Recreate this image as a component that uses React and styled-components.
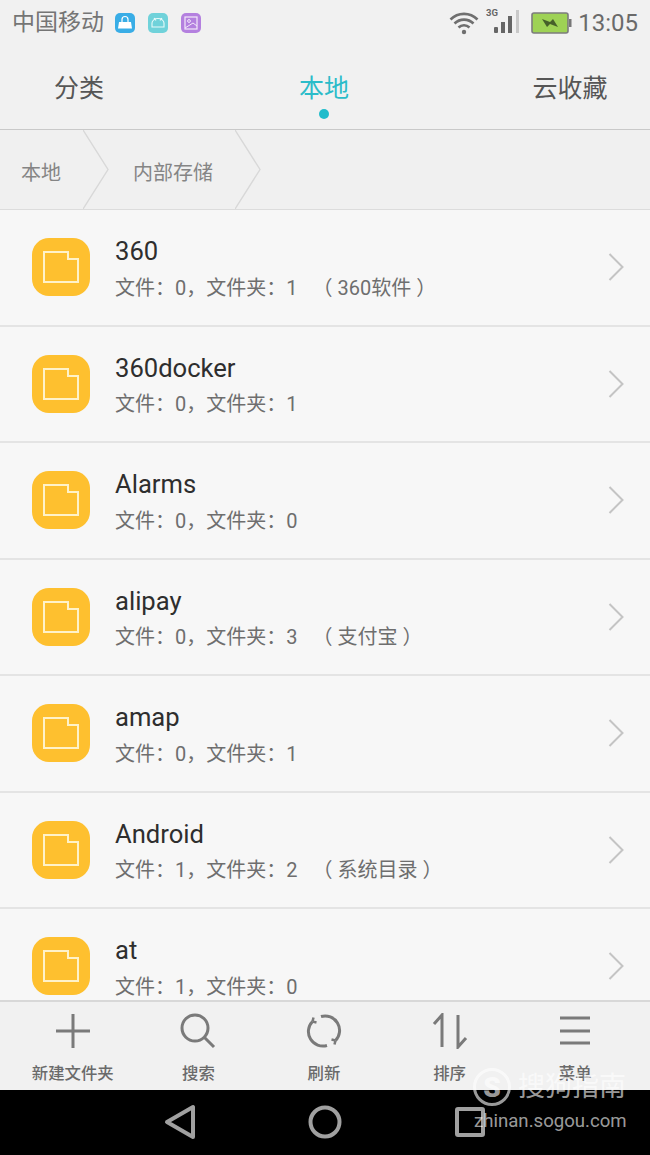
import React from "react";
import styled, { createGlobalStyle } from "styled-components";

const Global = createGlobalStyle`
  html, body { margin: 0; padding: 0; background: #000; }
  body { font-family: Roboto, "Noto Sans CJK SC", sans-serif; }
  * { box-sizing: border-box; }
`;

const Screen = styled.div`
  position: relative; width: 650px; height: 1155px; display: flex; flex-direction: column;
  overflow: hidden; background: #f1f1f1;
`;
const StatusBar = styled.div`
  height: 46px; flex: none; display: flex; align-items: center; padding: 0 12px; color: #757575;
`;
const Carrier = styled.span`
  font-size: 23px; line-height: 46px; width: 103px;
`;
const NotifyIcons = styled.div`
  display: flex; gap: 13px; flex: 1;
`;
const StatusRight = styled.div`
  display: flex; align-items: center;
`;
const StatusIcon = styled.svg`
  flex: none; margin-left: ${p => p.$gap || 0}px;
`;
const Clock = styled.span`
  font-size: 24px; color: #6a6a6a; margin-left: 6px;
`;
const Tabs = styled.nav`
  height: 84px; flex: none; display: grid; grid-template-columns: 158px 1fr 160px;
  border-bottom: 1px solid #c9c9c9;
`;
const Tab = styled.div`
  position: relative; display: flex; justify-content: center; padding-top: 25px;
  font-size: 25px; line-height: 36px; color: ${p => (p.$active ? "#2bbcc9" : "#565656")};
`;
const Dot = styled.i`
  position: absolute; left: 50%; top: 63px; width: 10px; height: 10px; margin-left: -5px;
  border-radius: 50%; background: #1fbccb;
`;
const Crumbs = styled.div`
  height: 80px; flex: none; display: flex; align-items: stretch; border-bottom: 1px solid #dcdcdc;
  background: #f0f0f0;
`;
const Crumb = styled.div`
  display: flex; align-items: center; font-size: 20px; color: #858585;
  padding-left: ${p => p.$pad}px;
`;
const CrumbLabel = styled.span`
  padding-top: 3px;
`;
const CrumbArrow = styled.svg`
  width: 26px; height: 79px; margin-left: 22px; flex: none;
`;
const List = styled.div`
  flex: 1; min-height: 0; overflow: hidden; background: #f7f7f7;
`;
const Row = styled.div`
  height: 116.5px; display: flex; align-items: center; padding: 0 26px 0 32px;
  border-bottom: 2px solid #e4e4e4;
`;
const Thumb = styled.div`
  width: 58px; height: 58px; flex: none; border-radius: 17px; background: #fec02f;
  display: flex; align-items: center; justify-content: center;
`;
const RowText = styled.div`
  flex: 1; margin-left: 25px; padding-top: 3.5px;
`;
const Title = styled.div`
  font-size: 25.6px; line-height: 37.5px; color: #2e2e2e;
`;
const Sub = styled.div`
  font-size: 20px; line-height: 34px; color: #6e6e6e; display: flex;
`;
const Note = styled.span`
  margin-left: 15px;
`;
const RowChevron = styled.svg`
  flex: none;
`;
const Toolbar = styled.div`
  height: 90px; flex: none; display: grid; grid-template-columns: repeat(5, 1fr); padding: 0 12px 0 10px;
  background: #f1f1f1; border-top: 2px solid #d8d8d8;
`;
const Tool = styled.div`
  display: flex; flex-direction: column; align-items: center; padding-top: 11px;
`;
const ToolLabel = styled.span`
  font-size: 16.4px; line-height: 22px; margin-top: 14px; color: #6a6a6a; font-weight: 500;
`;
const NavBar = styled.div`
  height: 65px; flex: none; background: #000; display: flex; align-items: center;
  padding: 0 0 2px 163px; gap: 109px;
`;
const NavIcon = styled.svg`
  flex: none; margin-left: ${p => p.$gap || 0}px;
`;
const Watermark = styled.div`
  position: absolute; left: 473px; top: 1067px; width: 170px; color: rgba(255,255,255,.62);
  pointer-events: none;
`;
const MarkTop = styled.div`
  display: flex; align-items: center; height: 40px;
`;
const MarkBadge = styled.span`
  width: 38px; height: 38px; border-radius: 50%; border: 3px solid rgba(255,255,255,.6);
  display: flex; align-items: center; justify-content: center; font-size: 28px; font-weight: 900;
  flex: none;
`;
const MarkName = styled.span`
  font-size: 27px; margin-left: 7px; line-height: 40px;
`;
const MarkUrl = styled.div`
  font-size: 18.6px; line-height: 26px; margin-top: 1px; margin-left: 1px; white-space: nowrap;
`;

const Folder = () => (
  <svg width="36" height="32" viewBox="0 0 36 32" fill="none" stroke="#fff2c8" strokeWidth="2">
    <path d="M1 1h24v7h10v23H1z" />
  </svg>
);
const Chevron = () => (
  <RowChevron width="16" height="28" viewBox="0 0 16 28" fill="none" stroke="#c4c4c4" strokeWidth="2">
    <path d="M1.5 1l13 13-13 13" />
  </RowChevron>
);
const Arrow = () => (
  <CrumbArrow viewBox="0 0 26 79" fill="none" stroke="#d8d8d8" strokeWidth="1.4">
    <path d="M0 0l25 39.5L0 79" />
  </CrumbArrow>
);
const Badge = ({ bg, children }) => (
  <svg width="20" height="20" viewBox="0 0 20 20">
    <rect width="20" height="20" rx="5" fill={bg} />
    {children}
  </svg>
);

const rows = [
  ["360", "0", "1", "（ 360软件 ）"],
  ["360docker", "0", "1"],
  ["Alarms", "0", "0"],
  ["alipay", "0", "3", "（ 支付宝 ）"],
  ["amap", "0", "1"],
  ["Android", "1", "2", "（ 系统目录 ）"],
  ["at", "1", "0"],
];

const stroke = { fill: "none", stroke: "#7a7a7a", strokeWidth: 3 };

export default function App() {
  return (
    <Screen>
      <Global />
      <StatusBar>
        <Carrier>中国移动</Carrier>
        <NotifyIcons>
          <Badge bg="#39ade6">
            <path d="M4 9h12l1 6.5H3z" fill="#fff" />
            <path d="M7 9V6.5a3 3 0 0 1 6 0V9" fill="none" stroke="#fff" strokeWidth="1.2" />
          </Badge>
          <Badge bg="#70d2da">
            <path d="M4 14V10a6 4.5 0 0 1 12 0v4zM6 5l2 2.5M14 5l-2 2.5" fill="none" stroke="#e8fafa" strokeWidth="1.1" />
          </Badge>
          <Badge bg="#b480df">
            <rect x="4" y="4" width="12" height="12" fill="none" stroke="#f3e8fb" strokeWidth="1.2" />
            <circle cx="8" cy="8" r="1.4" fill="none" stroke="#f3e8fb" />
            <path d="M4 15l8-5 4 3" fill="none" stroke="#f3e8fb" />
          </Badge>
        </NotifyIcons>
        <StatusRight>
          <StatusIcon width="30" height="24" viewBox="0 0 30 24" fill="none" stroke="#6f6f6f" strokeWidth="2.6">
            <path d="M1.5 8.5a19 19 0 0 1 27 0M5.5 12.5a13.5 13.5 0 0 1 19 0M9.5 16.5a8 8 0 0 1 11 0" />
            <circle cx="15" cy="21" r="2.2" fill="#6f6f6f" stroke="none" />
          </StatusIcon>
          <StatusIcon $gap={7} width="36" height="30" viewBox="0 0 36 30">
            <text x="0" y="8" fontSize="9.5" fontWeight="700" fill="#666" fontFamily="Roboto">3G</text>
            <rect x="8" y="19" width="4" height="6" rx="1" fill="#666" />
            <rect x="15" y="14" width="4" height="11" fill="#666" />
            <rect x="22" y="8" width="4" height="17" fill="#666" />
            <rect x="30" y="2" width="3" height="23" fill="#c9c9c9" />
          </StatusIcon>
          <StatusIcon $gap={9} width="41" height="22" viewBox="0 0 41 22">
            <rect x="1" y="1" width="36" height="20" rx="2" fill="#9ed255" stroke="#7c7c7c" strokeWidth="1.6" />
            <rect x="38" y="7" width="2.5" height="8" fill="#777" />
            <path d="M11 7l8 3 3-3 5 8-8-3-3 3z" fill="#46602a" />
          </StatusIcon>
          <Clock>13:05</Clock>
        </StatusRight>
      </StatusBar>
      <Tabs>
        <Tab>分类</Tab>
        <Tab $active>本地<Dot /></Tab>
        <Tab>云收藏</Tab>
      </Tabs>
      <Crumbs>
        <Crumb $pad={21}><CrumbLabel>本地</CrumbLabel><Arrow /></Crumb>
        <Crumb $pad={24}><CrumbLabel>内部存储</CrumbLabel><Arrow /></Crumb>
      </Crumbs>
      <List>
        {rows.map(([name, files, dirs, note]) => (
          <Row key={name}>
            <Thumb><Folder /></Thumb>
            <RowText>
              <Title>{name}</Title>
              <Sub>
                <span>文件：{files}，文件夹：{dirs}</span>
                {note && <Note>{note}</Note>}
              </Sub>
            </RowText>
            <Chevron />
          </Row>
        ))}
      </List>
      <Toolbar>
        <Tool>
          <svg width="36" height="36" viewBox="0 0 36 36" {...stroke}><path d="M18 1v34M1 18h34" /></svg>
          <ToolLabel>新建文件夹</ToolLabel>
        </Tool>
        <Tool>
          <svg width="36" height="36" viewBox="0 0 36 36" {...stroke}><circle cx="15" cy="15" r="13" /><path d="M24.5 24.5L34 34" /></svg>
          <ToolLabel>搜索</ToolLabel>
        </Tool>
        <Tool>
          <svg width="36" height="36" viewBox="0 0 36 36" {...stroke}>
            <path d="M6.5 8.5A14.5 14.5 0 0 0 21 32.5M29.5 27.5A14.5 14.5 0 0 0 15 3.5" />
            <path d="M6.5 8.5l1-4M6.5 8.5l4 1M29.5 27.5l-1 4M29.5 27.5l-4-1" strokeWidth="2.5" />
          </svg>
          <ToolLabel>刷新</ToolLabel>
        </Tool>
        <Tool>
          <svg width="36" height="36" viewBox="0 0 36 36" {...stroke}><path d="M10 34V2L2 11M26 2v32l8-9" /></svg>
          <ToolLabel>排序</ToolLabel>
        </Tool>
        <Tool>
          <svg width="36" height="36" viewBox="0 0 36 36" {...stroke}><path d="M3 5h30M3 18h30M3 30h30" /></svg>
          <ToolLabel>菜单</ToolLabel>
        </Tool>
      </Toolbar>
      <NavBar>
        <NavIcon width="36" height="36" viewBox="0 0 36 36" fill="none" stroke="#a0a0a0" strokeWidth="4" strokeLinejoin="round">
          <path d="M30 3v30L4 18z" />
        </NavIcon>
        <NavIcon width="34" height="34" viewBox="0 0 34 34" fill="none" stroke="#a0a0a0" strokeWidth="4">
          <circle cx="17" cy="17" r="14.5" />
        </NavIcon>
        <NavIcon $gap={4} width="30" height="30" viewBox="0 0 30 30" fill="none" stroke="#a0a0a0" strokeWidth="4">
          <rect x="2" y="2" width="26" height="26" rx="1" />
        </NavIcon>
      </NavBar>
      <Watermark>
        <MarkTop>
          <MarkBadge>S</MarkBadge>
          <MarkName>搜狗指南</MarkName>
        </MarkTop>
        <MarkUrl>zhinan.sogou.com</MarkUrl>
      </Watermark>
    </Screen>
  );
}
